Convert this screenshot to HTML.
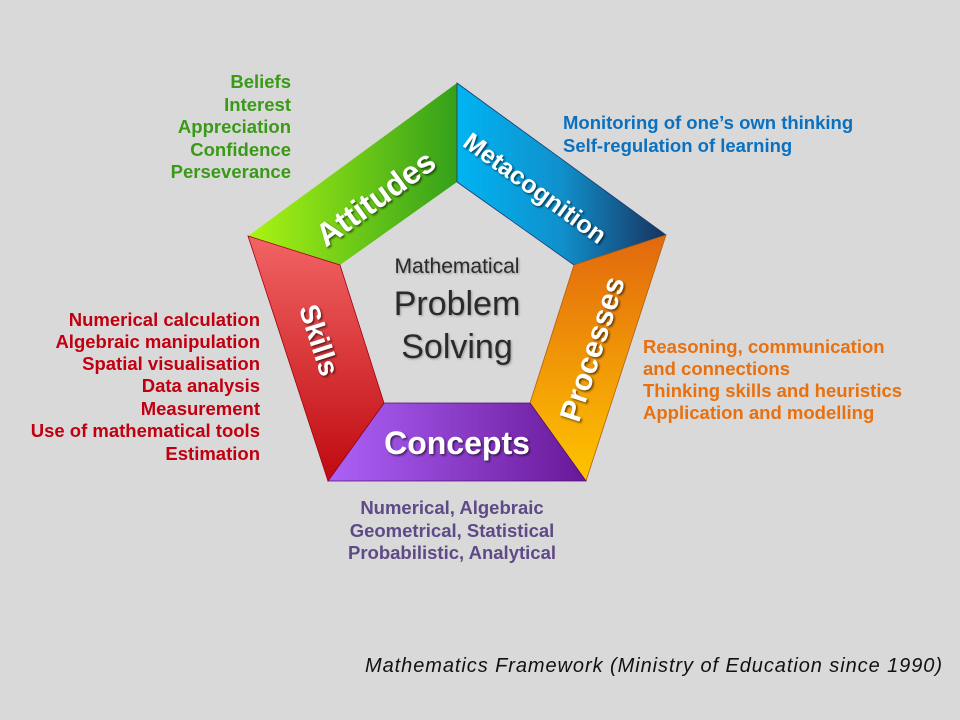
<!DOCTYPE html>
<html><head><meta charset="utf-8"><style>
html,body{margin:0;padding:0;background:#d9d9d9;}
svg{display:block}
text{font-family:"Liberation Sans",sans-serif;}
.b{font-weight:bold;font-size:18.5px;}
.lbl{font-weight:bold;fill:#fff;}
</style></head><body>
<svg width="960" height="720" viewBox="0 0 960 720" xmlns="http://www.w3.org/2000/svg">
<defs>
<linearGradient id="gA" x1="248" y1="0" x2="457" y2="0" gradientUnits="userSpaceOnUse"><stop offset="0" stop-color="#aaf514"/><stop offset="1" stop-color="#34a01a"/></linearGradient>
<linearGradient id="gM" x1="457" y1="0" x2="666" y2="0" gradientUnits="userSpaceOnUse"><stop offset="0" stop-color="#00b4f2"/><stop offset="0.5" stop-color="#1090cc"/><stop offset="1" stop-color="#17325e"/></linearGradient>
<linearGradient id="gP" x1="0" y1="236" x2="0" y2="481" gradientUnits="userSpaceOnUse"><stop offset="0" stop-color="#e2680e"/><stop offset="1" stop-color="#ffc400"/></linearGradient>
<linearGradient id="gC" x1="328" y1="0" x2="586" y2="0" gradientUnits="userSpaceOnUse"><stop offset="0" stop-color="#ad62f8"/><stop offset="1" stop-color="#681898"/></linearGradient>
<linearGradient id="gS" x1="0" y1="236" x2="0" y2="481" gradientUnits="userSpaceOnUse"><stop offset="0" stop-color="#f26464"/><stop offset="1" stop-color="#bf0a10"/></linearGradient>
<filter id="sh" x="-20%" y="-20%" width="140%" height="140%"><feDropShadow dx="1.5" dy="1.5" stdDeviation="1" flood-color="#000" flood-opacity="0.6"/></filter>
</defs>
<polygon points="248,236 457,83 457,182 340,265" fill="url(#gA)"/>
<polygon points="457,83 666,235 574,265 457,182" fill="url(#gM)" stroke="#1a3a70" stroke-width="0.8"/>
<polygon points="666,235 586,481 530,403 574,265" fill="url(#gP)" stroke="#b06010" stroke-width="0.8"/>
<polygon points="586,481 328,481 384,403 530,403" fill="url(#gC)" stroke="#501070" stroke-width="0.8"/>
<polygon points="328,481 248,236 340,265 384,403" fill="url(#gS)" stroke="#a00010" stroke-width="0.8"/>

<g filter="url(#sh)">
<text class="lbl" font-size="32" text-anchor="middle" transform="translate(382,207) rotate(-36)">Attitudes</text>
<text class="lbl" font-size="25" text-anchor="middle" transform="translate(530,195) rotate(36)">Metacognition</text>
<text class="lbl" font-size="28" text-anchor="middle" transform="translate(310,343) rotate(72)">Skills</text>
<text class="lbl" font-size="30" text-anchor="middle" transform="translate(602,352) rotate(-72)">Processes</text>
<text class="lbl" font-size="32" text-anchor="middle" x="457" y="454">Concepts</text>
</g>

<g fill="#2a2a2a" text-anchor="middle" style="filter:drop-shadow(1px 1px 1px rgba(0,0,0,0.3))">
<text x="457" y="273" font-size="21">Mathematical</text>
<text x="457" y="315" font-size="34">Problem</text>
<text x="457" y="358" font-size="34">Solving</text>
</g>

<g fill="#3a9a18" text-anchor="end">
<text class="b" x="291" y="88">Beliefs</text>
<text class="b" x="291" y="111">Interest</text>
<text class="b" x="291" y="133">Appreciation</text>
<text class="b" x="291" y="156">Confidence</text>
<text class="b" x="291" y="178">Perseverance</text>
</g>
<g fill="#c00010" text-anchor="end">
<text class="b" x="260" y="326">Numerical calculation</text>
<text class="b" x="260" y="348">Algebraic manipulation</text>
<text class="b" x="260" y="370">Spatial visualisation</text>
<text class="b" x="260" y="392">Data analysis</text>
<text class="b" x="260" y="415">Measurement</text>
<text class="b" x="260" y="437">Use of mathematical tools</text>
<text class="b" x="260" y="460">Estimation</text>
</g>
<g fill="#0a70c0">
<text class="b" x="563" y="129">Monitoring of one’s own thinking</text>
<text class="b" x="563" y="152">Self-regulation of learning</text>
</g>
<g fill="#e8700e">
<text class="b" x="643" y="353">Reasoning, communication</text>
<text class="b" x="643" y="375">and connections</text>
<text class="b" x="643" y="397">Thinking skills and heuristics</text>
<text class="b" x="643" y="419">Application and modelling</text>
</g>
<g fill="#5e4a86" text-anchor="middle">
<text class="b" x="452" y="514">Numerical, Algebraic</text>
<text class="b" x="452" y="537">Geometrical, Statistical</text>
<text class="b" x="452" y="559">Probabilistic, Analytical</text>
</g>
<text x="365" y="672" font-size="20" font-style="italic" fill="#111" textLength="577" lengthAdjust="spacing">Mathematics Framework  (Ministry of Education since 1990)</text>
</svg>
</body></html>
